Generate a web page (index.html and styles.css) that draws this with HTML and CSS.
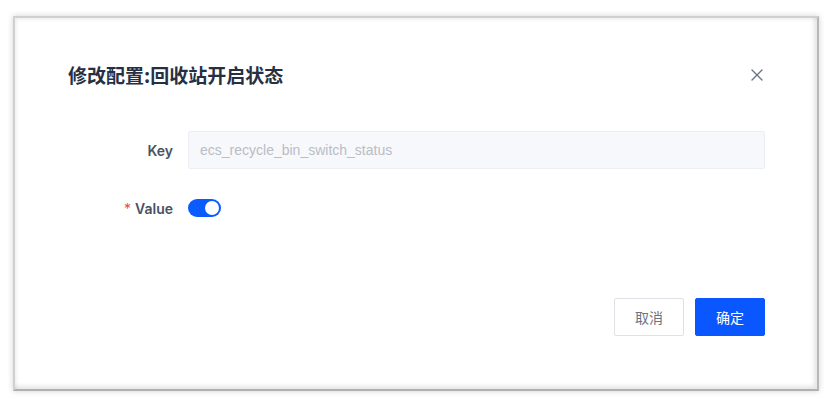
FILE: index.html
```html
<!DOCTYPE html>
<html lang="zh-CN">

<head>
    <meta charset="UTF-8">
    <meta name="viewport" content="width=device-width, initial-scale=1.0">
    <title>修改配置</title>
    <link rel="stylesheet" href="styles.css">
</head>

<body>
    <div class="frame">
        <div class="dialog-head">
            <h3 class="dialog-title">修改配置:回收站开启状态</h3>
            <span class="dialog-close">
                <svg width="14" height="14" viewBox="0 0 14 14">
                    <path d="M2 2L12 12M12 2L2 12" stroke="#6b7385" stroke-width="1.4" stroke-linecap="round" />
                </svg>
            </span>
        </div>
        <div class="form">
            <div class="form-row">
                <label class="form-label">Key</label>
                <div class="form-input">ecs_recycle_bin_switch_status</div>
            </div>
            <div class="form-row">
                <label class="form-label"><span class="req">*</span>Value</label>
                <span class="switch"><i></i></span>
            </div>
        </div>
        <div class="dialog-foot">
            <button class="btn">取消</button>
            <button class="btn btn-primary">确定</button>
        </div>
    </div>
</body>

</html>
```

FILE: styles.css
```css
* {
    padding: 0;
    margin: 0;
    box-sizing: border-box;
}

body {
    background: #fff;
    padding: 16px 13px 11px;
    font-family: "Liberation Sans", "Noto Sans CJK SC", sans-serif;
}

.frame {
    height: 375px;
    border: 2px solid #d0d0d0;
    border-right-color: #b8b8b8;
    border-bottom-color: #b0b0b0;
    box-shadow: 0 0 6px rgba(0, 0, 0, 0.18), inset 2px 2px 3px rgba(0, 0, 0, 0.06), inset -3px -3px 4px rgba(0, 0, 0, 0.1);
    padding: 45px 52px 0 53px;
    display: flex;
    flex-direction: column;
}

.dialog-head {
    display: flex;
    align-items: center;
    justify-content: space-between;
    height: 24px;
}

.dialog-title {
    font-family: "Noto Sans CJK SC", sans-serif;
    font-size: 19px;
    font-weight: 700;
    color: #273043;
    line-height: 24px;
}

.dialog-close {
    display: flex;
    margin-right: 1px;
}

.form {
    margin-top: 44px;
    display: flex;
    flex-direction: column;
    gap: 20px;
}

.form-row {
    display: flex;
    align-items: center;
    height: 38px;
}

.form-label {
    width: 120px;
    padding-right: 15px;
    text-align: right;
    font-family: "Inter", "Noto Sans CJK SC", sans-serif;
    font-size: 14px;
    font-weight: 600;
    color: #4a5263;
}

.req {
    color: #f04848;
    margin-right: 4px;
    font-weight: 400;
}

.form-input {
    flex: 1;
    height: 38px;
    line-height: 36px;
    padding: 0 11px;
    background: #f7f8fb;
    border: 1px solid #eceef3;
    border-radius: 2px;
    font-size: 14px;
    color: #b9bdc6;
}

.switch {
    position: relative;
    width: 33px;
    height: 18px;
    border-radius: 9px;
    background: #0b5cff;
}

.switch i {
    position: absolute;
    top: 2px;
    right: 2px;
    width: 14px;
    height: 14px;
    border-radius: 50%;
    background: #fff;
}

.dialog-foot {
    margin-top: 71px;
    display: flex;
    justify-content: flex-end;
    gap: 11px;
}

.btn {
    width: 70px;
    height: 38px;
    border: 1px solid #dfe1e6;
    border-radius: 2px;
    background: #fff;
    font-family: "Noto Sans CJK SC", sans-serif;
    font-size: 14px;
    color: #6b7280;
}

.btn-primary {
    background: #0b57ff;
    border-color: #0b57ff;
    color: #fff;
}
```
